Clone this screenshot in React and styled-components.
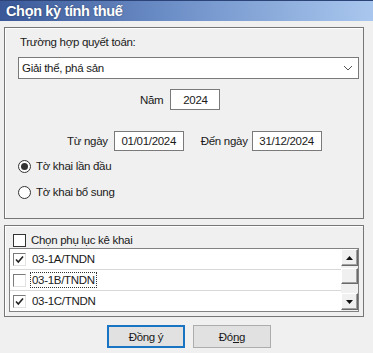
import React from 'react';
import styled, { createGlobalStyle } from 'styled-components';

const Global = createGlobalStyle`
  html, body { margin: 0; padding: 0; background: #f0f0f0; }
  body {
    font-family: "Liberation Sans", Arial, sans-serif;
    font-size: 11.5px;
    letter-spacing: -0.3px;
    color: #1a1a1a;
  }
`;

const Window = styled.div`
  width: 373px;
  height: 353px;
  background: #f0f0f0;
  overflow: hidden;
`;

const TitleBar = styled.div`
  height: 21px;
  display: flex;
  align-items: center;
  padding-left: 6px;
  background: linear-gradient(to right, #3a5898 0%, #6c8ec7 45%, #a9c7ee 100%);
  border-top: 1px solid #2c4478;
  box-sizing: border-box;
  color: #fff;
  font-size: 14.5px;
  letter-spacing: -0.35px;
  font-weight: bold;
  text-shadow: 0 0 2px rgba(0, 0, 0, 0.35);
`;

const Body = styled.div`
  padding: 6px 9px 0 4px;
`;

const Group = styled.div`
  box-sizing: border-box;
  height: ${(p) => p.h}px;
  margin-top: ${(p) => p.mt || 0}px;
  border: 1px solid #767676;
  box-shadow: inset 1px 1px 0 #ffffff;
  padding: ${(p) => p.pad};
  display: flex;
  flex-direction: column;
`;

const Label = styled.div`
  height: 14px;
  line-height: 14px;
  padding-left: 2px;
`;

const Combo = styled.div`
  box-sizing: border-box;
  height: 22px;
  margin-top: 8px;
  margin-right: 4px;
  background: #fff;
  border: 1px solid #7a7a7a;
  display: flex;
  align-items: center;
  justify-content: space-between;
  padding: 0 5px 0 3px;
`;

const Row = styled.div`
  display: flex;
  align-items: center;
  height: ${(p) => p.h || 20}px;
  margin-top: ${(p) => p.mt || 0}px;
  padding-left: ${(p) => p.pl || 0}px;
`;

const Field = styled.div`
  box-sizing: border-box;
  width: ${(p) => p.w}px;
  height: ${(p) => p.h || 20}px;
  margin-left: ${(p) => p.ml || 0}px;
  background: #fff;
  border: 1px solid #7a7a7a;
  display: flex;
  align-items: center;
  justify-content: center;
`;

const Text = styled.span`
  margin-left: ${(p) => p.ml || 0}px;
`;

const RadioCircle = styled.span`
  box-sizing: border-box;
  width: 13px;
  height: 13px;
  border-radius: 50%;
  border: 1px solid #333;
  background: #fff;
  display: flex;
  align-items: center;
  justify-content: center;
  margin-right: 5px;
  &::after {
    content: '';
    width: 7px;
    height: 7px;
    border-radius: 50%;
    background: ${(p) => (p.on ? '#333' : 'transparent')};
  }
`;

const Box = styled.span`
  box-sizing: border-box;
  width: 13px;
  height: 13px;
  border: 1px solid #333;
  background: #fff;
  margin-right: 5px;
`;

const List = styled.div`
  box-sizing: border-box;
  height: 64px;
  width: 350px;
  border: 1px solid #828282;
  background: #fff;
  display: flex;
`;

const Items = styled.div`
  flex: 1;
  display: flex;
  flex-direction: column;
`;

const Item = styled.div`
  height: 20px;
  display: flex;
  align-items: center;
  padding-left: 3px;
  border-bottom: ${(p) => (p.last ? 'none' : '1px solid #d8d8d8')};
`;

const ItemBox = styled.span`
  box-sizing: border-box;
  width: 13px;
  height: 13px;
  border-top: 1px solid #7a7a7a;
  border-left: 1px solid #7a7a7a;
  border-right: 1px solid #e2e2e2;
  border-bottom: 1px solid #e2e2e2;
  background: #fff;
  margin-right: 5px;
  display: flex;
  align-items: center;
  justify-content: center;
`;

const ItemText = styled.span`
  padding: 0 1px;
  outline: ${(p) => (p.focus ? '1px dotted #333' : 'none')};
  line-height: 14px;
`;

const ScrollBar = styled.div`
  width: 17px;
  display: flex;
  flex-direction: column;
  background: #f0f0f0;
  padding-bottom: 1px;
`;

const ScrollBtn = styled.div`
  box-sizing: border-box;
  height: ${(p) => p.h || 17}px;
  margin-top: ${(p) => p.mt || 0}px;
  background: #f0f0f0;
  border-top: 1px solid #ffffff;
  border-left: 1px solid #ffffff;
  border-right: 1px solid #696969;
  border-bottom: 1px solid #696969;
  box-shadow: inset -1px -1px 0 #a0a0a0;
  display: flex;
  align-items: center;
  justify-content: center;
`;

const Buttons = styled.div`
  display: flex;
  gap: 8px;
  margin-top: 8px;
  padding-left: 103px;
`;

const Button = styled.div`
  box-sizing: border-box;
  width: 78px;
  height: 23px;
  background: #e1e1e1;
  border: ${(p) => (p.primary ? '2px solid #1a74c4' : '1px solid #adadad')};
  display: flex;
  align-items: center;
  justify-content: center;
`;

const Check = () => (
  <svg width="9" height="9" viewBox="0 0 9 9">
    <path d="M1 4.5 L3.3 7 L8 1.5" fill="none" stroke="#222" strokeWidth="1.6" />
  </svg>
);

const Chevron = () => (
  <svg width="10" height="6" viewBox="0 0 10 6">
    <path d="M1 1 L5 5 L9 1" fill="none" stroke="#555" strokeWidth="1" />
  </svg>
);

const Arrow = ({ up }) => (
  <svg width="7" height="4" viewBox="0 0 7 4">
    <path d={up ? 'M0 4 L3.5 0 L7 4 Z' : 'M0 0 L3.5 4 L7 0 Z'} fill="#111" />
  </svg>
);

const App = () => {
  return (
    <Window>
      <Global />
      <TitleBar>Chọn kỳ tính thuế</TitleBar>
      <Body>
        <Group h={192} pad="7px 0 0 13px">
          <Label>Trường hợp quyết toán:</Label>
          <Combo>
            <span>Giải thể, phá sản</span>
            <Chevron />
          </Combo>
          <Row h={21} mt={10} pl={122}>
            <Text>Năm</Text>
            <Field w={50} h={21} ml={7}>2024</Field>
          </Row>
          <Row h={20} mt={21} pl={49}>
            <Text>Từ ngày</Text>
            <Field w={70} ml={6}>01/01/2024</Field>
            <Text ml={17}>Đến ngày</Text>
            <Field w={70} ml={4}>31/12/2024</Field>
          </Row>
          <Row h={20} mt={5}>
            <RadioCircle on />
            <Text>Tờ khai lần đầu</Text>
          </Row>
          <Row h={20} mt={6}>
            <RadioCircle />
            <Text>Tờ khai bổ sung</Text>
          </Row>
        </Group>
        <Group h={92} mt={6} pad="6px 0 0 4px">
          <Row h={16} pl={4}>
            <Box />
            <Text>Chọn phụ lục kê khai</Text>
          </Row>
          <List>
            <Items>
              <Item>
                <ItemBox><Check /></ItemBox>
                <ItemText>03-1A/TNDN</ItemText>
              </Item>
              <Item>
                <ItemBox />
                <ItemText focus>03-1B/TNDN</ItemText>
              </Item>
              <Item last>
                <ItemBox><Check /></ItemBox>
                <ItemText>03-1C/TNDN</ItemText>
              </Item>
            </Items>
            <ScrollBar>
              <ScrollBtn><Arrow up /></ScrollBtn>
              <ScrollBtn h={16} mt={2} />
              <ScrollBtn mt={9}><Arrow /></ScrollBtn>
            </ScrollBar>
          </List>
        </Group>
        <Buttons>
          <Button primary>
            <span>Đồn<u>g</u> ý</span>
          </Button>
          <Button>
            <span>Đó<u>n</u>g</span>
          </Button>
        </Buttons>
      </Body>
    </Window>
  );
};

export default App;
